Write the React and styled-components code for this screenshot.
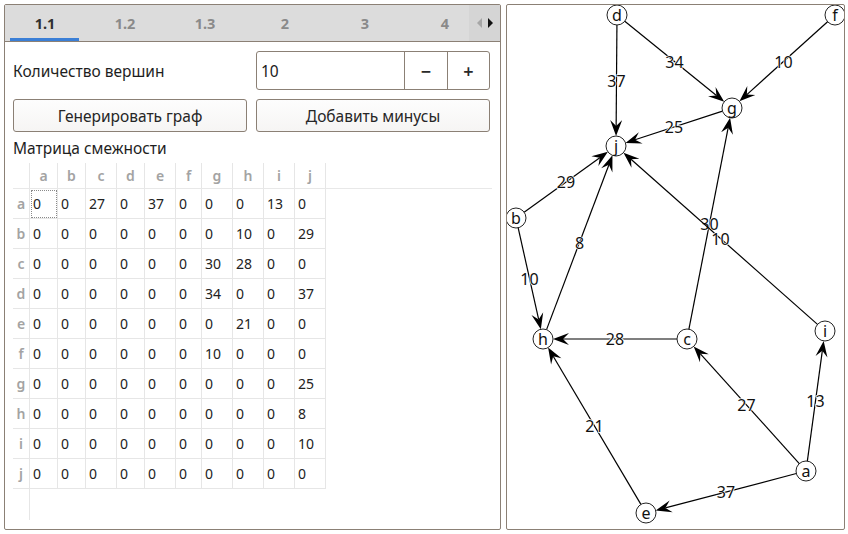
import React from 'react';
import styled, { createGlobalStyle } from 'styled-components';

const GlobalStyle = createGlobalStyle`
    html, body {
        margin: 0;
        padding: 0;
        background: #ffffff;
    }
    body {
        font-family: "Noto Sans", "DejaVu Sans", sans-serif;
        font-size: 14px;
        color: #202020;
    }
`;

const Window = styled.div`
    display: flex;
    gap: 5px;
    padding: 4px 3px 4px 4px;
    height: 534px;
    box-sizing: border-box;
`;

const Panel = styled.div`
    border: 1px solid #8b8075;
    border-radius: 2px;
    box-sizing: border-box;
    height: 526px;
    overflow: hidden;
    background: #ffffff;
`;

const LeftPanel = styled(Panel)`
    width: 498px;
    display: flex;
    flex-direction: column;
`;

const RightPanel = styled(Panel)`
    width: 339px;
`;

const TabBar = styled.div`
    position: relative;
    display: flex;
    height: 36px;
    background: #dcdcdc;
    border-bottom: 1px solid #8b8075;
    flex-shrink: 0;
    overflow: hidden;
`;

const Tab = styled.div`
    position: relative;
    width: 80px;
    flex-shrink: 0;
    display: flex;
    align-items: center;
    justify-content: center;
    font-weight: 700;
    font-size: 14.5px;
    color: ${(p) => (p.$active ? '#303030' : '#8a8a8a')};
    &::after {
        content: '';
        display: ${(p) => (p.$active ? 'block' : 'none')};
        position: absolute;
        left: 5px;
        right: 6px;
        bottom: 0;
        height: 3px;
        background: #3b7fd6;
    }
`;

/* scroll buttons sit over the last tab, as in a Qt tab bar */
const TabScroll = styled.div`
    position: absolute;
    right: 0;
    top: 0;
    bottom: 0;
    width: 31px;
    display: flex;
    align-items: center;
    justify-content: center;
    gap: 6px;
    background: #d5d5d5;
`;

const Arrow = styled.span`
    width: 0;
    height: 0;
    border-top: 5px solid transparent;
    border-bottom: 5px solid transparent;
    ${(p) =>
        p.$dir === 'left'
            ? `border-right: 5px solid ${p.$disabled ? '#a6a6a6' : '#111'};`
            : `border-left: 5px solid ${p.$disabled ? '#a6a6a6' : '#111'};`}
`;

const Content = styled.div`
    flex: 1;
    display: flex;
    flex-direction: column;
    padding: 9px 8px 0 8px;
`;

const FormGrid = styled.div`
    display: grid;
    grid-template-columns: 234px 234px;
    column-gap: 9px;
    row-gap: 9px;
`;

const Label = styled.div`
    display: flex;
    align-items: center;
    font-size: 15.5px;
    color: #1e1e1e;
`;

const SpinBox = styled.div`
    display: flex;
    height: 39px;
    border: 1px solid #8b8075;
    border-radius: 3px;
    box-sizing: border-box;
    background: #fff;
`;

const SpinValue = styled.div`
    flex: 1;
    display: flex;
    align-items: center;
    padding-left: 4px;
    font-size: 15.5px;
`;

const SpinButton = styled.div`
    width: ${(p) => p.$w}px;
    display: flex;
    align-items: center;
    justify-content: center;
    border-left: 1px solid #8b8075;
    font-size: 18px;
    font-weight: 600;
    color: #2a2a2a;
`;

const Button = styled.div`
    height: 33px;
    border: 1px solid #8b8075;
    border-radius: 3px;
    box-sizing: border-box;
    background: linear-gradient(#fdfdfd, #f6f5f4);
    display: flex;
    align-items: center;
    justify-content: center;
    font-size: 15.5px;
    color: #262626;
`;

const SectionTitle = styled.div`
    margin-top: 5px;
    font-size: 15.5px;
    line-height: 22px;
    color: #1e1e1e;
`;

const Table = styled.div`
    margin-top: 4px;
    flex: 1;
    display: flex;
    flex-direction: column;
`;

const Row = styled.div`
    display: flex;
    height: ${(p) => (p.$header ? 26 : 30)}px;
    ${(p) => (p.$header ? 'border-bottom: 1px solid #e8e8e8; box-sizing: border-box;' : '')}
`;

const HeadCell = styled.div`
    width: ${(p) => p.$w}px;
    flex-shrink: 0;
    box-sizing: border-box;
    display: flex;
    align-items: center;
    justify-content: center;
    font-weight: 600;
    color: #a3a3a3;
    font-size: 14px;
    border-right: 1px solid #e6e6e6;
    ${(p) => (p.$row ? 'border-bottom: 1px solid #e6e6e6;' : '')}
`;

const Cell = styled.div`
    width: ${(p) => p.$w}px;
    flex-shrink: 0;
    box-sizing: border-box;
    display: flex;
    align-items: center;
    padding-left: 3px;
    font-size: 14px;
    color: #222;
    border-right: 1px solid #e6e6e6;
    border-bottom: 1px solid #e6e6e6;
    ${(p) => (p.$focus ? 'outline: 1px dotted #8a8a8a; outline-offset: -2px;' : '')}
`;

const Filler = styled.div`
    width: 17px;
    height: 31px;
    border-right: 1px solid #e6e6e6;
    box-sizing: border-box;
`;

const letters = ['a', 'b', 'c', 'd', 'e', 'f', 'g', 'h', 'i', 'j'];
const colWidths = [28, 28, 31, 28, 31, 26, 31, 31, 31, 31];

const matrix = [
    [0, 0, 27, 0, 37, 0, 0, 0, 13, 0],
    [0, 0, 0, 0, 0, 0, 0, 10, 0, 29],
    [0, 0, 0, 0, 0, 0, 30, 28, 0, 0],
    [0, 0, 0, 0, 0, 0, 34, 0, 0, 37],
    [0, 0, 0, 0, 0, 0, 0, 21, 0, 0],
    [0, 0, 0, 0, 0, 0, 10, 0, 0, 0],
    [0, 0, 0, 0, 0, 0, 0, 0, 0, 25],
    [0, 0, 0, 0, 0, 0, 0, 0, 0, 8],
    [0, 0, 0, 0, 0, 0, 0, 0, 0, 10],
    [0, 0, 0, 0, 0, 0, 0, 0, 0, 0],
];

// node centres, in the right panel's coordinates
const nodes = {
    a: [299, 466],
    b: [9, 213],
    c: [180, 334],
    d: [110, 10],
    e: [139, 508],
    f: [328, 10],
    g: [225, 103],
    h: [36, 334],
    i: [318, 326],
    j: [109, 141],
};

const R = 10;

const Edge = ({ from, to, weight }) => {
    const [x1, y1] = nodes[from];
    const [x2, y2] = nodes[to];
    const dx = x2 - x1;
    const dy = y2 - y1;
    const len = Math.hypot(dx, dy);
    const ux = dx / len;
    const uy = dy / len;
    const sx = x1 + ux * R;
    const sy = y1 + uy * R;
    const tx = x2 - ux * R;
    const ty = y2 - uy * R;
    const px = -uy;
    const py = ux;
    const back = 16;
    const wing = 6;
    const notch = 10;
    const head = [
        [tx, ty],
        [tx - ux * back + px * wing, ty - uy * back + py * wing],
        [tx - ux * notch, ty - uy * notch],
        [tx - ux * back - px * wing, ty - uy * back - py * wing],
    ]
        .map((p) => p.join(','))
        .join(' ');
    const mx = (x1 + x2) / 2;
    const my = (y1 + y2) / 2;
    return (
        <g>
            <line x1={sx} y1={sy} x2={tx - ux * notch} y2={ty - uy * notch} stroke="#000" strokeWidth="1.2" />
            <polygon points={head} fill="#000" />
            <text
                x={mx}
                y={my}
                textAnchor="middle"
                dominantBaseline="central"
                fontSize="16"
                fontFamily='"Noto Sans", sans-serif'
                fill="#111"
                stroke="#fff"
                strokeWidth="1.5"
                paintOrder="stroke"
            >
                {weight}
            </text>
        </g>
    );
};

const Graph = () => {
    const edges = [];
    matrix.forEach((row, i) =>
        row.forEach((w, j) => {
            if (w) edges.push({ from: letters[i], to: letters[j], weight: w });
        })
    );
    return (
        <svg width="337" height="524" viewBox="0 0 337 524">
            {edges.map((e) => (
                <Edge key={e.from + e.to} {...e} />
            ))}
            {Object.entries(nodes).map(([name, [x, y]]) => (
                <g key={name}>
                    <circle cx={x} cy={y} r={R} fill="#fff" stroke="#222" strokeWidth="1" />
                    <text
                        x={x}
                        y={y}
                        textAnchor="middle"
                        dominantBaseline="central"
                        fontSize="16"
                        fontFamily='"Noto Sans", sans-serif'
                        fill="#111"
                    >
                        {name}
                    </text>
                </g>
            ))}
        </svg>
    );
};

const tabs = ['1.1', '1.2', '1.3', '2', '3', '4'];

export default function App() {
    return (
        <>
            <GlobalStyle />
            <Window>
                <LeftPanel>
                    <TabBar>
                        {tabs.map((t, i) => (
                            <Tab key={t} $active={i === 0}>
                                {t}
                            </Tab>
                        ))}
                        <TabScroll>
                            <Arrow $dir="left" $disabled />
                            <Arrow $dir="right" />
                        </TabScroll>
                    </TabBar>
                    <Content>
                        <FormGrid>
                            <Label>Количество вершин</Label>
                            <SpinBox>
                                <SpinValue>10</SpinValue>
                                <SpinButton $w={42}>−</SpinButton>
                                <SpinButton $w={41}>+</SpinButton>
                            </SpinBox>
                            <Button>Генерировать граф</Button>
                            <Button>Добавить минусы</Button>
                        </FormGrid>
                        <SectionTitle>Матрица смежности</SectionTitle>
                        <Table>
                            <Row $header>
                                <HeadCell $w={17} />
                                {letters.map((l, i) => (
                                    <HeadCell key={l} $w={colWidths[i]}>
                                        {l}
                                    </HeadCell>
                                ))}
                            </Row>
                            {matrix.map((row, r) => (
                                <Row key={letters[r]}>
                                    <HeadCell $w={17} $row>
                                        {letters[r]}
                                    </HeadCell>
                                    {row.map((v, c) => (
                                        <Cell key={c} $w={colWidths[c]} $focus={r === 0 && c === 0}>
                                            {v}
                                        </Cell>
                                    ))}
                                </Row>
                            ))}
                            <Filler />
                        </Table>
                    </Content>
                </LeftPanel>
                <RightPanel>
                    <Graph />
                </RightPanel>
            </Window>
        </>
    );
}
